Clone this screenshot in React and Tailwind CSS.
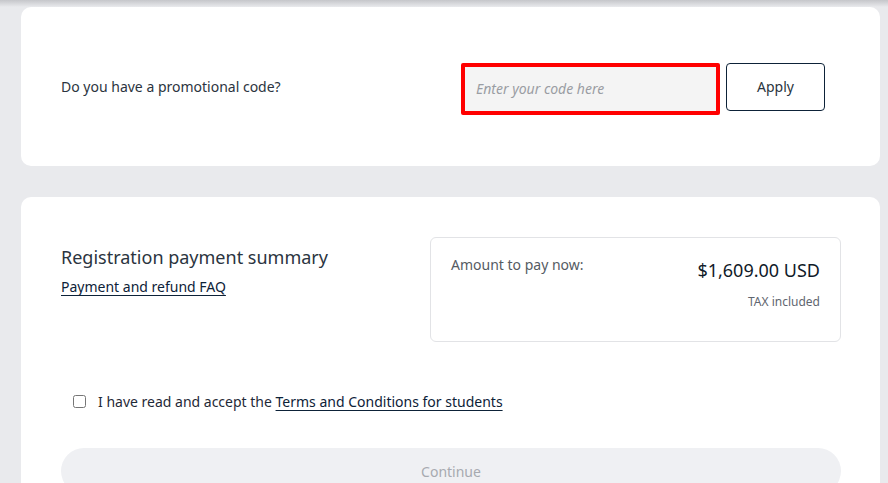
import React, { useState } from 'react';

function App() {
  const [code, setCode] = useState('');
  const [accepted, setAccepted] = useState(false);

  return (
    <div className="min-h-screen bg-[#e9eaed] font-['Noto_Sans',sans-serif] text-[#1f2a37] overflow-hidden h-[483px]">
      <div className="h-[7px] bg-gradient-to-b from-[#c5c6ca] to-[#e9eaed]" />

      <div className="ml-[21px] mr-[8px] flex flex-col gap-[31px]">
        <div className="bg-white rounded-[10px] h-[159px] flex items-center pl-[40px] pr-[55px]">
          <p className="text-[14px] text-[#2b3440] flex-1">Do you have a promotional code?</p>
          <div className="flex items-start gap-[6px] pt-[4px]">
            <div className="border-[4px] border-[#ff0000] rounded-[2px]">
              <input
                type="text"
                value={code}
                onChange={(e) => setCode(e.target.value)}
                placeholder="Enter your code here"
                className="block w-[251px] h-[44px] bg-[#f4f4f4] px-[11px] text-[14px] italic placeholder:text-[#9a9da3] outline-none"
              />
            </div>
            <button className="w-[99px] h-[48px] border border-[#0d2238] rounded-[4px] text-[14px] text-[#2b3440] bg-white">
              Apply
            </button>
          </div>
        </div>

        <div className="bg-white rounded-t-[10px] pt-[40px] pl-[40px] pr-[39px] pb-[40px]">
          <div className="flex items-start justify-between">
            <div className="pt-[7px]">
              <h2 className="text-[18px] text-[#2b3440] leading-[26px]">Registration payment summary</h2>
              <a href="#" className="mt-[6px] block text-[14px] text-[#0d2238] underline underline-offset-[3px]">
                Payment and refund FAQ
              </a>
            </div>
            <div className="w-[411px] h-[105px] border border-[#e2e3e6] rounded-[6px] pl-[20px] pr-[20px] pt-[16px]">
              <div className="flex justify-between items-start">
                <span className="text-[14px] text-[#555b63]">Amount to pay now:</span>
                <span className="text-[18px] text-[#101a28] mt-[3px]">$1,609.00 USD</span>
              </div>
              <p className="text-right text-[12px] text-[#5f6670] mt-[9px]">TAX included</p>
            </div>
          </div>

          <label className="mt-[49px] ml-[12px] flex items-center gap-[12px] text-[14px] text-[#1f2a37]">
            <input
              type="checkbox"
              checked={accepted}
              onChange={(e) => setAccepted(e.target.checked)}
              className="w-[13px] h-[13px]"
            />
            <span>
              I have read and accept the{' '}
              <a href="#" className="text-[#0d2238] underline underline-offset-[3px]">Terms and Conditions for students</a>
            </span>
          </label>

          <button disabled className="mt-[36px] w-full h-[46px] rounded-full bg-[#eff0f3] text-[14px] text-[#a7aab0]">
            Continue
          </button>
        </div>
      </div>
    </div>
  );
}

export default App;
